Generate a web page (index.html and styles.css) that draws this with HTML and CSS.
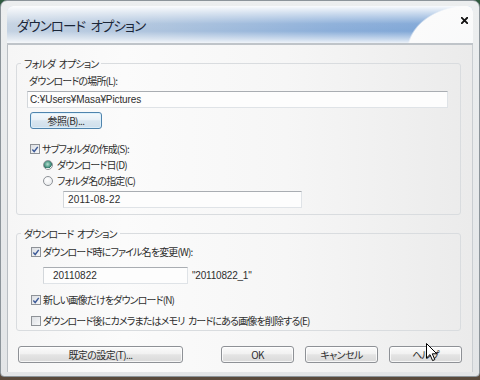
FILE: index.html
```html
<!DOCTYPE html>
<html lang="ja">
<head>
<meta charset="utf-8">
<title>ダウンロード オプション</title>
<link rel="stylesheet" href="styles.css">
</head>
<body>
<div class="window">
  <div class="titlebar">
    <span class="title">ダウンロード オプション</span>
    <span class="close"><svg width="7" height="7" viewBox="0 0 7 7"><path d="M0.8 0.8 L6.2 6.2 M6.2 0.8 L0.8 6.2" stroke="#111" stroke-width="1.9" stroke-linecap="square"/></svg></span>
  </div>
  <div class="content">
    <fieldset class="group g1">
      <legend>フォルダ オプション</legend>
      <div class="row label-loc">ダウンロードの場所(L):</div>
      <div class="field path">C:¥Users¥Masa¥Pictures</div>
      <button class="btn browse">参照(B)...</button>
      <div class="row check sub"><span class="cb"><svg width="9" height="9" viewBox="0 0 9 9"><path d="M1.5 4.6 L3.6 6.8 L7.6 1.6" fill="none" stroke="#3d5a98" stroke-width="1.6"/></svg></span>サブフォルダの作成(S):</div>
      <div class="row radio"><span class="rb on"></span>ダウンロード日(D)</div>
      <div class="row radio"><span class="rb"></span>フォルダ名の指定(C)</div>
      <div class="field date">2011-08-22</div>
    </fieldset>
    <fieldset class="group g2">
      <legend>ダウンロード オプション</legend>
      <div class="row check c1"><span class="cb"><svg width="9" height="9" viewBox="0 0 9 9"><path d="M1.5 4.6 L3.6 6.8 L7.6 1.6" fill="none" stroke="#3d5a98" stroke-width="1.6"/></svg></span>ダウンロード時にファイル名を変更(W):</div>
      <div class="name-row">
        <div class="field name">20110822</div>
        <span class="preview">"20110822_1"</span>
      </div>
      <div class="row check c2"><span class="cb"><svg width="9" height="9" viewBox="0 0 9 9"><path d="M1.5 4.6 L3.6 6.8 L7.6 1.6" fill="none" stroke="#3d5a98" stroke-width="1.6"/></svg></span>新しい画像だけをダウンロード(N)</div>
      <div class="row check c3"><span class="cb empty"></span>ダウンロード後にカメラまたはメモリ カードにある画像を削除する(E)</div>
    </fieldset>
    <div class="buttons">
      <button class="btn defaults">既定の設定(T)...</button>
      <div class="right-buttons">
        <button class="btn small">OK</button>
        <button class="btn small">キャンセル</button>
        <button class="btn small">ヘルプ</button>
      </div>
    </div>
  </div>
  <svg class="cursor" width="12" height="19" viewBox="0 0 12 19"><path d="M0.5 0.5 L0.5 15 L4 11.6 L6.6 17.6 L8.8 16.6 L6.3 10.8 L10.8 10.8 Z" fill="#fff" stroke="#000" stroke-width="1" stroke-linejoin="round"/></svg>
</div>
</body>
</html>
```

FILE: styles.css
```css
* { box-sizing: border-box; }

html, body {
  margin: 0;
  padding: 0;
}

body {
  width: 480px;
  height: 380px;
  overflow: hidden;
  background: linear-gradient(to bottom, #2f5a3e 0%, #4a5248 60%, #5a4a3c 100%);
  font-family: "Noto Sans CJK JP", "Noto Sans", sans-serif;
  font-size: 10px;
  line-height: 14px;
  letter-spacing: -0.85px;
  word-spacing: 2px;
  color: #2e2e2e;
  font-feature-settings: "palt";
}

.window {
  position: relative;
  width: 480px;
  height: 377px;
  border: 1px solid #8c949a;
  border-radius: 7px 7px 4px 4px;
  background: linear-gradient(to bottom, #eceeef 0%, #e3e5e7 100%);
  padding: 5px 6px 4px 6px;
  display: flex;
  flex-direction: column;
}

.titlebar {
  height: 39px;
  flex: none;
  border-radius: 6px 6px 0 0;
  border-bottom: 2px solid #bfc4c9;
  display: flex;
  align-items: center;
  padding: 0 5px 0 10px;
  background:
    radial-gradient(63px 45px at 463px 44px, #f8f9fa 0%, #fbfbfb 97%, rgba(251, 251, 251, 0) 100%),
    linear-gradient(to bottom, rgba(255, 255, 255, 0.95) 0%, rgba(255, 255, 255, 0.6) 18%, rgba(255, 255, 255, 0.05) 48%, rgba(255, 255, 255, 0) 68%, rgba(255, 255, 255, 0.55) 90%, rgba(255, 255, 255, 0.85) 100%),
    linear-gradient(to right, #c4d2e2 0%, #abc2dd 35%, #8baed9 70%, #7aa3d5 100%);
}

.title {
  font-size: 13.5px;
  letter-spacing: -0.9px;
  word-spacing: 3px;
  color: #1b2638;
  flex: 1;
  margin-top: 1px;
}

.close {
  display: flex;
  align-self: flex-start;
  margin-top: 11px;
}

.content {
  flex: 1;
  border-left: 1px solid #b9bec3;
  border-right: 1px solid #c9cdd1;
  background: linear-gradient(to right, #f6f6f6 0%, #fbfbfb 25%, #f6f6f6 60%, #ebebeb 100%);
  display: flex;
  flex-direction: column;
}

.group {
  margin: 0 0 0 8px;
  padding: 0;
  width: 445px;
  min-inline-size: 0;
  border: 1px solid #d9dcdf;
  border-radius: 3px;
  display: flex;
  flex-direction: column;
  align-items: flex-start;
}

.group legend {
  margin-left: 4px;
  padding: 0 3px;
  line-height: 13px;
}

.g1 {
  margin-top: 12px;
  padding-bottom: 6px;
}

.g2 {
  margin-top: 12px;
  padding-bottom: 2px;
}

.row {
  height: 14px;
  display: flex;
  align-items: center;
  white-space: pre;
}

.label-loc {
  margin: 4px 0 0 12px;
}

.field {
  height: 17px;
  background: #fdfdfd;
  border: 1px solid #dfe3e7;
  border-top-color: #a9adb2;
  border-left-color: #d3d7db;
  display: flex;
  align-items: center;
  white-space: nowrap;
  font-family: "Liberation Sans", "Noto Sans CJK JP", sans-serif;
  font-feature-settings: normal;
  font-size: 10px;
  letter-spacing: 0;
}

.path {
  margin: 3px 0 0 10px;
  width: 421px;
  padding-left: 2px;
  letter-spacing: -0.1px;
}

.btn {
  height: 17px;
  padding: 0;
  border: 1px solid #8e9196;
  border-radius: 3px;
  background: linear-gradient(to bottom, #fbfbfb 0%, #f1f1f1 45%, #e4e4e4 52%, #d9d9d9 100%);
  box-shadow: inset 0 0 0 1px rgba(255, 255, 255, 0.75);
  font-family: "Noto Sans CJK JP", sans-serif;
  font-feature-settings: "palt";
  font-size: 10px;
  letter-spacing: -0.6px;
  line-height: 14px;
  color: #2e2e2e;
}

.browse {
  margin: 4px 0 0 13px;
  width: 72px;
  border-color: #4f84ad;
  background: linear-gradient(to bottom, #f5f9fc 0%, #e9f1f7 45%, #d9e6f0 52%, #cfdfeb 100%);
  box-shadow: inset 0 0 0 1px rgba(220, 240, 252, 0.9);
}

.check .cb {
  width: 10px;
  height: 10px;
  margin-right: 2px;
  border: 1px solid #8e9297;
  background: linear-gradient(135deg, #dcdfe3 0%, #f7f8f9 100%);
  display: flex;
  align-items: center;
  justify-content: center;
  flex: none;
}

.sub {
  margin: 13px 0 0 13px;
}

.radio {
  margin: 2px 0 0 26px;
}

.rb {
  width: 10px;
  height: 10px;
  border-radius: 50%;
  border: 1px solid #8e9297;
  background: radial-gradient(circle at 40% 35%, #ffffff 0%, #e4e6e9 100%);
  margin-right: 4px;
  flex: none;
}

.rb.on {
  background:
    radial-gradient(circle at 45% 40%, #b8e0d2 0%, #4f9a88 45%, #2f6f62 62%, rgba(255, 255, 255, 0) 66%),
    radial-gradient(circle, #e8eaec 0%, #ffffff 100%);
}

.date {
  margin: 3px 0 0 46px;
  width: 239px;
  padding-left: 4px;
  letter-spacing: 0.2px;
}

.c1 {
  margin: 5px 0 0 14px;
}

.name-row {
  margin: 8px 0 0 26px;
  display: flex;
  align-items: center;
}

.name {
  width: 145px;
  padding-left: 9px;
}

.preview {
  margin-left: 4px;
  font-family: "Liberation Sans", sans-serif;
  font-size: 10px;
  letter-spacing: -0.2px;
}

.c2 {
  margin: 9px 0 0 14px;
}

.c3 {
  margin: 7px 0 0 14px;
}

.buttons {
  margin-top: 15px;
  padding: 0 10px;
  display: flex;
  align-items: center;
}

.defaults {
  width: 165px;
}

.right-buttons {
  margin-left: auto;
  display: flex;
  gap: 11px;
}

.small {
  width: 73px;
}

.cursor {
  position: absolute;
  left: 425px;
  top: 342px;
}
```
